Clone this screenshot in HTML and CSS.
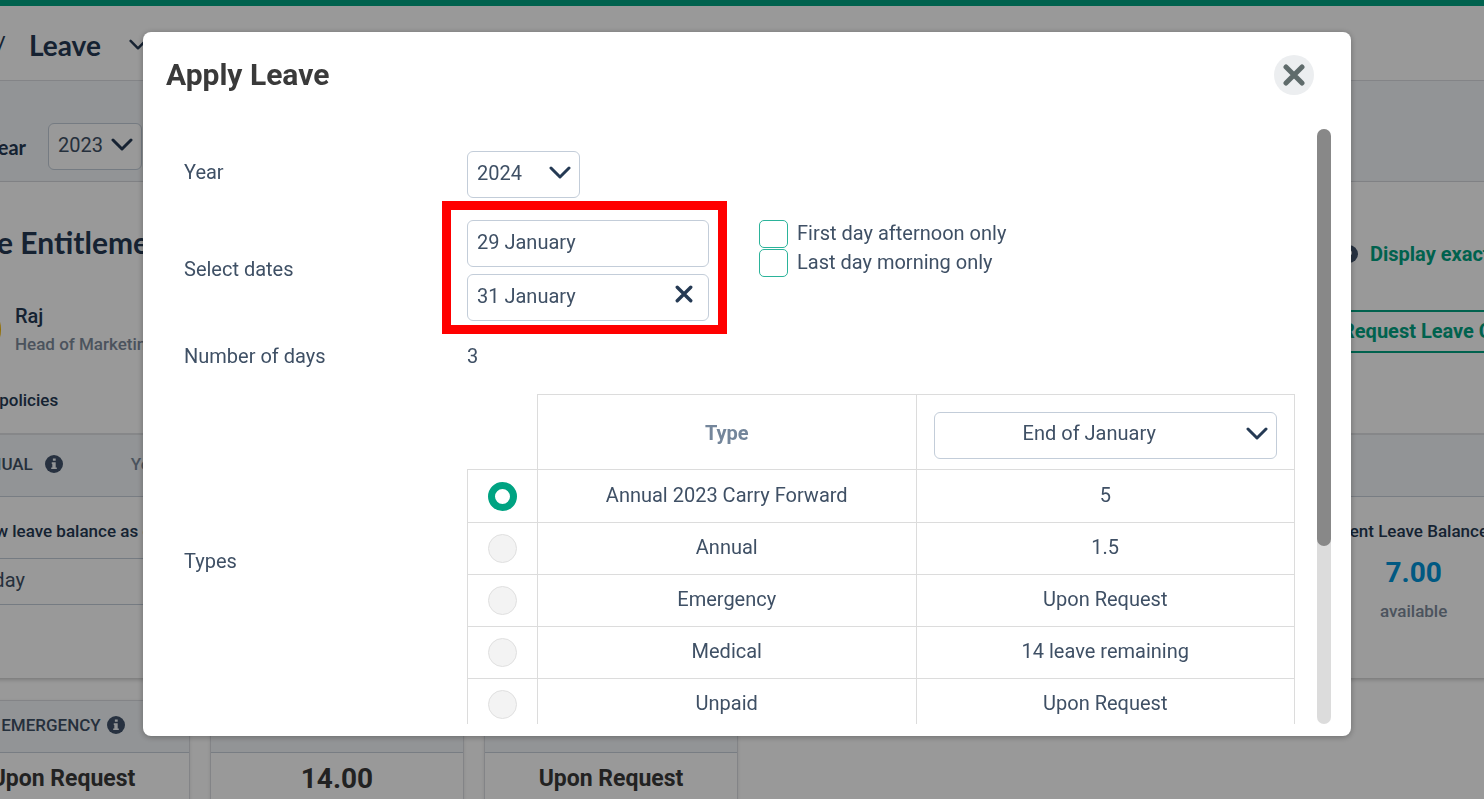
FILE: index.html
```html
<!DOCTYPE html>
<html lang="en">
<head>
    <meta charset="UTF-8">
    <meta name="viewport" content="width=device-width, initial-scale=1.0">
    <title>Apply Leave</title>
    <link rel="stylesheet" href="styles.css">
</head>
<body>
    <div class="page">
        <header class="topbar">
            <span class="slash">/</span>
            <h1>Leave</h1>
            <svg class="chevron-small" viewBox="0 0 22 14"><path d="M2 2l9 9 9-9"/></svg>
        </header>

        <div class="filter">
            <label class="filter-label" for="pageYear">Year</label>
            <div class="select filter-select">
                <select id="pageYear"><option>2023</option></select>
                <svg class="chevron" viewBox="0 0 22 14"><path d="M2 2l9 9 9-9"/></svg>
            </div>
        </div>

        <section class="card">
            <div class="card-head">
                <div class="person">
                    <h2>Leave Entitlement</h2>
                    <div class="profile">
                        <div class="avatar"></div>
                        <div>
                            <div class="name">Raj</div>
                            <div class="role">Head of Marketing</div>
                        </div>
                    </div>
                    <a class="policies" href="#">View policies</a>
                </div>
                <div class="actions">
                    <div class="exact">
                        <svg class="info" viewBox="0 0 16 16"><circle cx="8" cy="8" r="8"/><path d="M6 6a2 2 0 1 1 2 3" fill="none" stroke="#fff" stroke-width="2"/></svg>
                        <a href="#">Display exact</a>
                    </div>
                    <button class="request">Request Leave Credit</button>
                </div>
            </div>
            <div class="band">
                <span>ANNUAL</span>
                <svg class="info" viewBox="0 0 16 16"><circle cx="8" cy="8" r="8"/><path d="M7 3h2.500v2H7zM6 6.500h3.500V11h1v1.500h-5V11h1V8H6z" fill="#f4f7fa"/></svg>
                <span class="band-note">Year</span>
            </div>
            <div class="balance">
                <div class="balance-date">
                    <label for="asOf">Show leave balance as of</label>
                    <input id="asOf" type="text" value="Today">
                </div>
                <div class="current">
                    <div class="current-label">Current Leave Balance</div>
                    <div class="current-value">7.00</div>
                    <div class="current-note">available</div>
                </div>
            </div>
        </section>

        <div class="tiles">
            <div class="tile">
                <div class="tile-head">
                    <span>EMERGENCY</span>
                    <svg class="info" viewBox="0 0 16 16"><circle cx="8" cy="8" r="8"/><path d="M7 3h2.500v2H7zM6 6.500h3.500V11h1v1.500h-5V11h1V8H6z" fill="#f4f7fa"/></svg>
                </div>
                <div class="tile-value">Upon Request</div>
            </div>
            <div class="tile">
                <div class="tile-head"></div>
                <div class="tile-value tile-number">14.00</div>
            </div>
            <div class="tile">
                <div class="tile-head"></div>
                <div class="tile-value">Upon Request</div>
            </div>
        </div>
    </div>

    <div class="overlay">
        <div class="modal" role="dialog" aria-labelledby="modalTitle">
            <div class="modal-head">
                <h2 id="modalTitle">Apply Leave</h2>
                <button class="close" aria-label="Close">
                    <svg viewBox="0 0 22 22"><path d="M3 3l16 16M19 3L3 19"/></svg>
                </button>
            </div>
            <div class="modal-main">
                <form class="form">
                    <label for="year">Year</label>
                    <div class="select year-select">
                        <select id="year"><option>2024</option></select>
                        <svg class="chevron" viewBox="0 0 22 14"><path d="M2 2l9 9 9-9"/></svg>
                    </div>

                    <label for="dateFrom">Select dates</label>
                    <div class="date-row">
                        <div class="dates">
                            <input type="text" id="dateFrom" value="29 January">
                            <div class="date-to">
                                <input type="text" aria-label="End date" value="31 January">
                                <button type="button" class="clear" aria-label="Clear">
                                    <svg viewBox="0 0 16 16"><path d="M2 2l12 12M14 2L2 14"/></svg>
                                </button>
                            </div>
                        </div>
                        <div class="checks">
                            <label><input type="checkbox"><span>First day afternoon only</span></label>
                            <label><input type="checkbox"><span>Last day morning only</span></label>
                        </div>
                    </div>

                    <span>Number of days</span>
                    <span class="days">3</span>

                    <span>Types</span>
                    <table class="types">
                        <thead>
                            <tr>
                                <td class="corner"></td>
                                <th>Type</th>
                                <td class="month-cell">
                                    <div class="select month-select">
                                        <select aria-label="Balance at"><option>End of January</option></select>
                                        <svg class="chevron" viewBox="0 0 22 14"><path d="M2 2l9 9 9-9"/></svg>
                                    </div>
                                </td>
                            </tr>
                        </thead>
                        <tbody>
                            <tr class="selected">
                                <td><input type="radio" name="type" id="carry" checked></td>
                                <td><label for="carry">Annual 2023 Carry Forward</label></td>
                                <td>5</td>
                            </tr>
                            <tr>
                                <td><input type="radio" name="type" id="annual"></td>
                                <td><label for="annual">Annual</label></td>
                                <td>1.5</td>
                            </tr>
                            <tr>
                                <td><input type="radio" name="type" id="emergency"></td>
                                <td><label for="emergency">Emergency</label></td>
                                <td>Upon Request</td>
                            </tr>
                            <tr>
                                <td><input type="radio" name="type" id="medical"></td>
                                <td><label for="medical">Medical</label></td>
                                <td>14 leave remaining</td>
                            </tr>
                            <tr>
                                <td><input type="radio" name="type" id="unpaid"></td>
                                <td><label for="unpaid">Unpaid</label></td>
                                <td>Upon Request</td>
                            </tr>
                        </tbody>
                    </table>
                </form>
                <div class="scrollbar"><div class="thumb"></div></div>
            </div>
        </div>
    </div>
</body>
</html>
```
FILE: styles.css
```css
* {
    box-sizing: border-box;
}
body {
    margin: 0;
    height: 100vh;
    overflow: hidden;
    font-family: Roboto, Arial, sans-serif;
    font-size: 20px;
    line-height: 24px;
    color: #3f5065;
    background-color: #fff;
}
h1, h2 {
    margin: 0;
    font-size: 28px;
    line-height: 34px;
}
h2 {
    font-size: 30px;
}
a {
    text-decoration: none;
}
input, select, button {
    font-family: inherit;
    font-size: inherit;
    color: inherit;
    margin: 0;
}
input[type="text"], select {
    appearance: none;
    width: 100%;
    height: 47px;
    padding: 0 9px 4px;
    border: 1px solid #c3cdd9;
    border-radius: 6px;
    background-color: #fff;
}
.select {
    position: relative;
}
.chevron, .chevron-small {
    width: 22px;
    height: 14px;
    fill: none;
    stroke: #253a54;
    stroke-width: 3;
    stroke-linecap: round;
    stroke-linejoin: round;
}
.select .chevron {
    position: absolute;
    right: 9px;
    top: 15px;
    pointer-events: none;
}

/* Page behind the dialog */
.page {
    margin: 0 -64px;
}
.topbar {
    display: flex;
    align-items: center;
    height: 81px;
    padding: 3px 64px 0 60px;
    border-top: 6px solid #00a382;
    border-bottom: 1px solid #dadde2;
    color: #253a54;
}
.topbar h1 {
    font-family: Lato, sans-serif;
    margin: 0 28px 0 23px;
}
.slash {
    font-size: 24px;
}
.chevron-small {
    width: 18px;
}
.filter {
    display: flex;
    align-items: center;
    height: 101px;
    padding: 31px 0 0 51px;
    gap: 22px;
    background-color: #f4f7fa;
    border-bottom: 1px solid #dadde2;
}
.filter-label {
    font-family: Lato, sans-serif;
    font-weight: bold;
    color: #253a54;
}
.filter-select {
    width: 94px;
}
.card {
    height: 496px;
    box-shadow: 0 2px 4px rgba(0, 0, 0, 0.2);
}
.card-head {
    display: flex;
    justify-content: space-between;
    height: 251px;
    padding-top: 43px;
}
.card h2 {
    font-family: Lato, sans-serif;
    color: #253a54;
}
.profile {
    display: flex;
    align-items: center;
    gap: 14px;
    margin: 38px 0 26px;
}
.avatar {
    width: 65px;
    height: 65px;
    border-radius: 50%;
    background-color: #f5b800;
}
.name {
    line-height: 28px;
    font-weight: 500;
    color: #253a54;
}
.role {
    font-size: 17px;
    line-height: 28px;
    font-weight: 500;
    color: #7d8b9c;
}
.policies {
    display: block;
    padding-left: 22px;
    font-size: 17px;
    font-weight: 500;
    color: #253a54;
}
.actions {
    width: 250px;
    padding-top: 17px;
}
.exact {
    display: flex;
    align-items: center;
    gap: 12px;
    padding-left: 42px;
    margin-bottom: 44px;
}
.exact a {
    font-weight: bold;
    color: #00a382;
}
.info {
    width: 18px;
    height: 18px;
    fill: #41536b;
}
.request {
    width: 100%;
    height: 43px;
    padding: 0 42px 2px;
    border: 2px solid #00a382;
    background-color: #fff;
    color: #00a382;
    font-weight: bold;
    text-align: left;
    white-space: nowrap;
}
.band {
    display: flex;
    align-items: center;
    height: 64px;
    padding: 0 0 3px 30px;
    gap: 12px;
    background-color: #f4f7fa;
    border-top: 2px solid #dfe1e4;
    border-bottom: 1px solid #c9d0da;
    font-size: 17px;
    font-weight: 500;
}
.band-note {
    margin-left: 56px;
    color: #7d8b9c;
}
.balance {
    display: flex;
    justify-content: space-between;
    padding: 22px 60px 0 30px;
    font-size: 17px;
    font-weight: 500;
    color: #253a54;
}
.balance-date {
    width: 300px;
}
.balance-date label {
    display: block;
    margin-bottom: 15px;
}
.balance-date input {
    padding-left: 4px;
    font-size: 20px;
    color: #3f5065;
}
.current {
    text-align: center;
}
.current-value {
    margin: 15px 0 11px;
    padding-left: 22px;
    font-size: 28px;
    line-height: 30px;
    font-weight: bold;
    color: #0094d9;
}
.current-note {
    padding-left: 22px;
    color: #7d8b9c;
}
.tiles {
    display: flex;
    gap: 20px;
    margin-top: 22px;
}
.tile {
    width: 254px;
    height: 120px;
    border: 1px solid #dadde2;
    box-shadow: 0 1px 3px rgba(0, 0, 0, 0.1);
}
.tile-head {
    display: flex;
    align-items: center;
    justify-content: center;
    gap: 6px;
    height: 52px;
    padding-bottom: 3px;
    background-color: #f4f7fa;
    border-bottom: 1px solid #c9d0da;
    font-size: 17px;
    font-weight: 500;
}
.tile-value {
    padding-top: 10px;
    text-align: center;
    font-size: 23px;
    line-height: 32px;
    font-weight: bold;
    color: #3a3a3a;
}
.tile-number {
    font-size: 28px;
}

/* Dialog */
.overlay {
    position: fixed;
    inset: 0;
    padding: 32px 133px 62px 143px;
    background-color: rgba(0, 0, 0, 0.4);
}
.modal {
    padding: 23px 20px 12px 23px;
    border-radius: 8px;
    background-color: #fff;
    box-shadow: 0 1px 6px rgba(0, 0, 0, 0.3);
}
.modal-head {
    display: flex;
    align-items: center;
    justify-content: space-between;
    padding-right: 17px;
    margin-bottom: 34px;
}
.modal-head h2 {
    color: #3a3a3a;
}
.close {
    display: flex;
    align-items: center;
    justify-content: center;
    width: 40px;
    height: 40px;
    padding: 0;
    border: none;
    border-radius: 50%;
    background-color: #eceef0;
}
.close svg {
    width: 22px;
    height: 22px;
    stroke: #5f6b6b;
    stroke-width: 5;
    stroke-linecap: round;
}
.modal-main {
    display: flex;
    gap: 22px;
    height: calc(100vh - 204px);
}
.form {
    display: grid;
    grid-template-columns: 283px 1fr;
    align-items: center;
    align-content: start;
    flex: 1;
    padding: 22px 0 0 18px;
    overflow: hidden;
}
.year-select {
    width: 113px;
    margin-bottom: 22px;
}
.form > label {
    padding-bottom: 3px;
}
.form > label[for="year"] {
    padding-bottom: 28px;
}
.date-row {
    display: flex;
    gap: 50px;
}
.dates {
    position: relative;
    display: grid;
    gap: 7px;
    width: 242px;
}
/* red frame round both dates */
.dates::after {
    content: "";
    position: absolute;
    inset: -19px -18px -13px -25px;
    border: 9px solid #f00;
    pointer-events: none;
}
.date-to {
    position: relative;
}
.clear {
    position: absolute;
    right: 16px;
    top: 11px;
    display: flex;
    padding: 0;
    border: none;
    background: none;
}
.clear svg {
    width: 18px;
    height: 18px;
    stroke: #253a54;
    stroke-width: 3;
    stroke-linecap: round;
}
.checks {
    display: grid;
    gap: 1px;
    align-content: start;
}
.checks label {
    display: flex;
    align-items: center;
    gap: 9px;
    height: 28px;
}
.checks span {
    padding-bottom: 2px;
}
.checks input {
    appearance: none;
    width: 29px;
    height: 28px;
    border: 1px solid #2bb39a;
    border-radius: 5px;
}
.form > span {
    padding: 23px 0 26px;
}
.types {
    width: 100%;
    border-collapse: collapse;
    table-layout: fixed;
    text-align: center;
}
.types td, .types th {
    height: 52px;
    padding: 0 0 3px;
    border: 1px solid #dcdcdc;
}
.types .selected td {
    height: 53px;
}
.types th {
    height: 75px;
    padding: 4px 0 2px;
    color: #74869b;
}
.types .corner {
    width: 70px;
    border-top: none;
    border-left: none;
}
.types .month-cell {
    padding: 6px 17px 0;
}
.month-select select {
    padding: 0 40px 4px 8px;
    text-align: center;
    text-align-last: center;
}
.types input {
    appearance: none;
    display: block;
    width: 29px;
    height: 29px;
    margin: 3px auto 0;
    border: 1px solid #e0e0e0;
    border-radius: 50%;
    background-color: #f3f3f3;
}
.types input:checked {
    border: 7px solid #00a382;
    background-color: #fff;
}
.scrollbar {
    width: 14px;
    border-radius: 7px;
    background-color: #dcdcdc;
}
.thumb {
    height: 70%;
    border-radius: 7px;
    background-color: #888;
}
```
